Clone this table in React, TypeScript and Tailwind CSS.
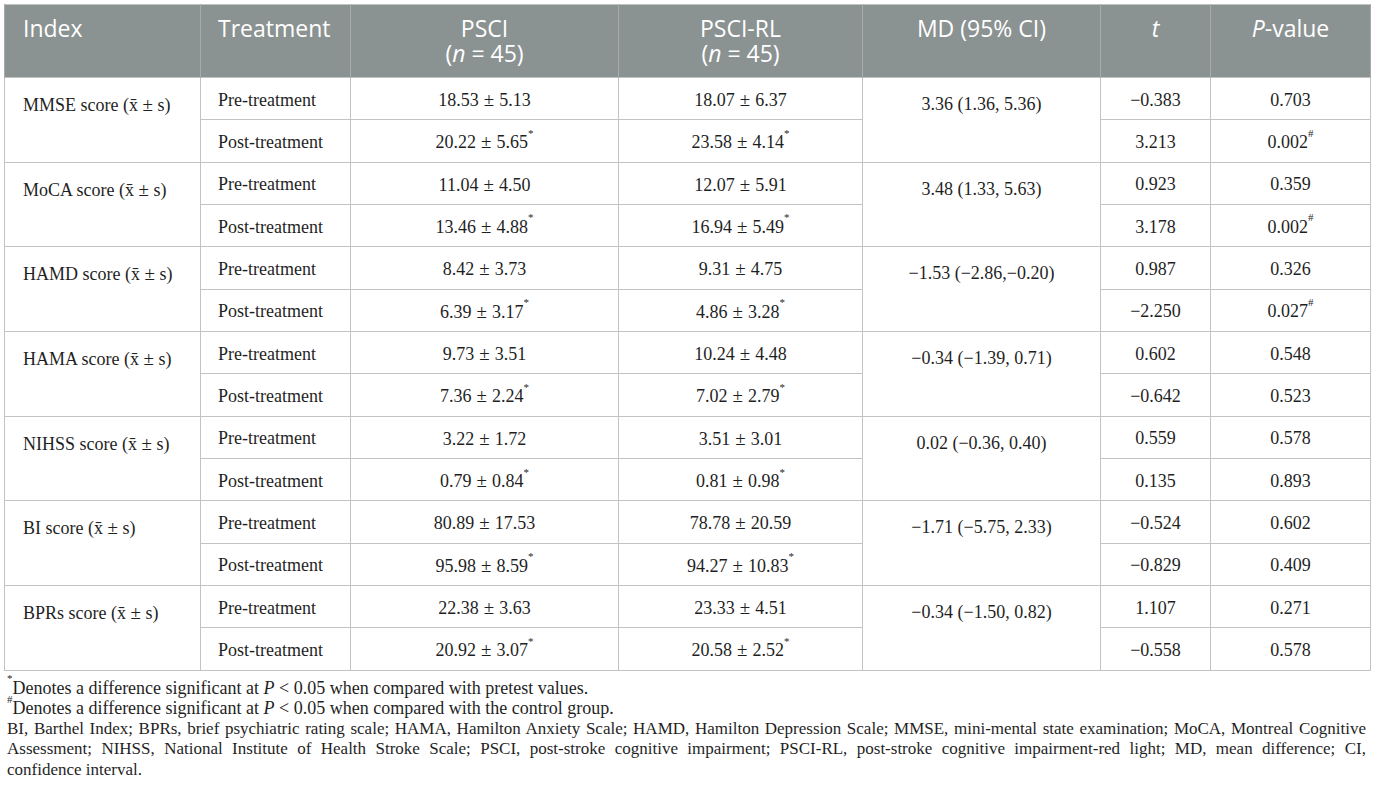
import React from "react";

type Group = {
  name: string;
  pre: [string, string, string, string];
  post: [string, string, string, string];
  md: string;
  postHash?: boolean;
};

const groups: Group[] = [
  { name: "MMSE", pre: ["18.53 ± 5.13", "18.07 ± 6.37", "−0.383", "0.703"], post: ["20.22 ± 5.65", "23.58 ± 4.14", "3.213", "0.002"], md: "3.36 (1.36, 5.36)", postHash: true },
  { name: "MoCA", pre: ["11.04 ± 4.50", "12.07 ± 5.91", "0.923", "0.359"], post: ["13.46 ± 4.88", "16.94 ± 5.49", "3.178", "0.002"], md: "3.48 (1.33, 5.63)", postHash: true },
  { name: "HAMD", pre: ["8.42 ± 3.73", "9.31 ± 4.75", "0.987", "0.326"], post: ["6.39 ± 3.17", "4.86 ± 3.28", "−2.250", "0.027"], md: "−1.53 (−2.86,−0.20)", postHash: true },
  { name: "HAMA", pre: ["9.73 ± 3.51", "10.24 ± 4.48", "0.602", "0.548"], post: ["7.36 ± 2.24", "7.02 ± 2.79", "−0.642", "0.523"], md: "−0.34 (−1.39, 0.71)" },
  { name: "NIHSS", pre: ["3.22 ± 1.72", "3.51 ± 3.01", "0.559", "0.578"], post: ["0.79 ± 0.84", "0.81 ± 0.98", "0.135", "0.893"], md: "0.02 (−0.36, 0.40)" },
  { name: "BI", pre: ["80.89 ± 17.53", "78.78 ± 20.59", "−0.524", "0.602"], post: ["95.98 ± 8.59", "94.27 ± 10.83", "−0.829", "0.409"], md: "−1.71 (−5.75, 2.33)" },
  { name: "BPRs", pre: ["22.38 ± 3.63", "23.33 ± 4.51", "1.107", "0.271"], post: ["20.92 ± 3.07", "20.58 ± 2.52", "−0.558", "0.578"], md: "−0.34 (−1.50, 0.82)" },
];

const serif = { fontFamily: '"Liberation Serif", "Times New Roman", serif' };
const sans = { fontFamily: '"Open Sans", "Noto Sans", sans-serif' };

const td = "border border-[#c2c4c2] text-[18px] text-[#1f1f1f] align-middle pt-[3px] pb-0";
const sup = "text-[11px] align-[6px] leading-none";
const th = "border-x border-[#a6abab] font-normal align-top pt-[11px]";

function PM({ v }: { v: string }) {
  const [a, b] = v.split(" ± ");
  return (
    <>
      {a}
      <span className="mx-[5px] text-[19px]">±</span>
      {b}
    </>
  );
}

export default function App() {
  return (
    <div className="bg-white w-[1375px] h-[797px] overflow-hidden pl-[4px] pt-[4px]" style={serif}>
      <table className="border-collapse w-[1366px] table-fixed border border-[#c2c4c2]">
        <colgroup>
          <col className="w-[196px]" />
          <col className="w-[150px]" />
          <col className="w-[268px]" />
          <col className="w-[244px]" />
          <col className="w-[238px]" />
          <col className="w-[110px]" />
          <col className="w-[160px]" />
        </colgroup>
        <thead>
          <tr className="h-[73px] bg-[#8b9292] text-white text-[23px] leading-[25px]" style={sans}>
            <th className={`${th} text-left pl-[18px]`}>Index</th>
            <th className={`${th} text-left pl-[17px]`}>Treatment</th>
            <th className={`${th} text-center`}>
              <div>PSCI</div>
              <div>
                (<i>n</i> = 45)
              </div>
            </th>
            <th className={`${th} text-center`}>
              <div>PSCI-RL</div>
              <div>
                (<i>n</i> = 45)
              </div>
            </th>
            <th className={`${th} text-center`}>MD (95% CI)</th>
            <th className={`${th} text-center`}>
              <i>t</i>
            </th>
            <th className={`${th} text-center`}>
              <i>P</i>-value
            </th>
          </tr>
        </thead>
        <tbody>
          {groups.map((g) => (
            <React.Fragment key={g.name}>
              <tr className="h-[42.35px]">
                <td rowSpan={2} className={`${td} align-top pl-[18px] pt-[13px]`}>
                  {g.name} score (x̄ <span className="text-[19px]">±</span> s)
                </td>
                <td className={`${td} pl-[17px]`}>Pre-treatment</td>
                <td className={`${td} text-center`}>
                  <PM v={g.pre[0]} />
                </td>
                <td className={`${td} text-center`}>
                  <PM v={g.pre[1]} />
                </td>
                <td rowSpan={2} className={`${td} align-top text-center pt-[13px]`}>{g.md}</td>
                <td className={`${td} text-center`}>{g.pre[2]}</td>
                <td className={`${td} text-center`}>{g.pre[3]}</td>
              </tr>
              <tr className="h-[42.35px]">
                <td className={`${td} pl-[17px]`}>Post-treatment</td>
                <td className={`${td} text-center`}>
                  <PM v={g.post[0]} />
                  <sup className={sup}>*</sup>
                </td>
                <td className={`${td} text-center`}>
                  <PM v={g.post[1]} />
                  <sup className={sup}>*</sup>
                </td>
                <td className={`${td} text-center`}>{g.post[2]}</td>
                <td className={`${td} text-center`}>
                  {g.post[3]}
                  {g.postHash && <sup className={sup}>#</sup>}
                </td>
              </tr>
            </React.Fragment>
          ))}
        </tbody>
      </table>
      <div className="w-[1362px] pl-[3px] mt-[7px] text-[18px] leading-[20.5px] text-[#1f1f1f]">
        <p>
          <sup className={sup}>*</sup>Denotes a difference significant at <i>P</i> &lt; 0.05 when compared with pretest values.
        </p>
        <p>
          <sup className={sup}>#</sup>Denotes a difference significant at <i>P</i> &lt; 0.05 when compared with the control group.
        </p>
        <p className="text-justify text-[17px]">
          BI, Barthel Index; BPRs, brief psychiatric rating scale; HAMA, Hamilton Anxiety Scale; HAMD, Hamilton Depression Scale; MMSE, mini-mental state examination; MoCA, Montreal Cognitive Assessment; NIHSS, National Institute of Health Stroke Scale; PSCI, post-stroke cognitive impairment; PSCI-RL, post-stroke cognitive impairment-red light; MD, mean difference; CI,{" "}
          <span className="whitespace-nowrap">confidence interval.</span>
        </p>
      </div>
    </div>
  );
}
